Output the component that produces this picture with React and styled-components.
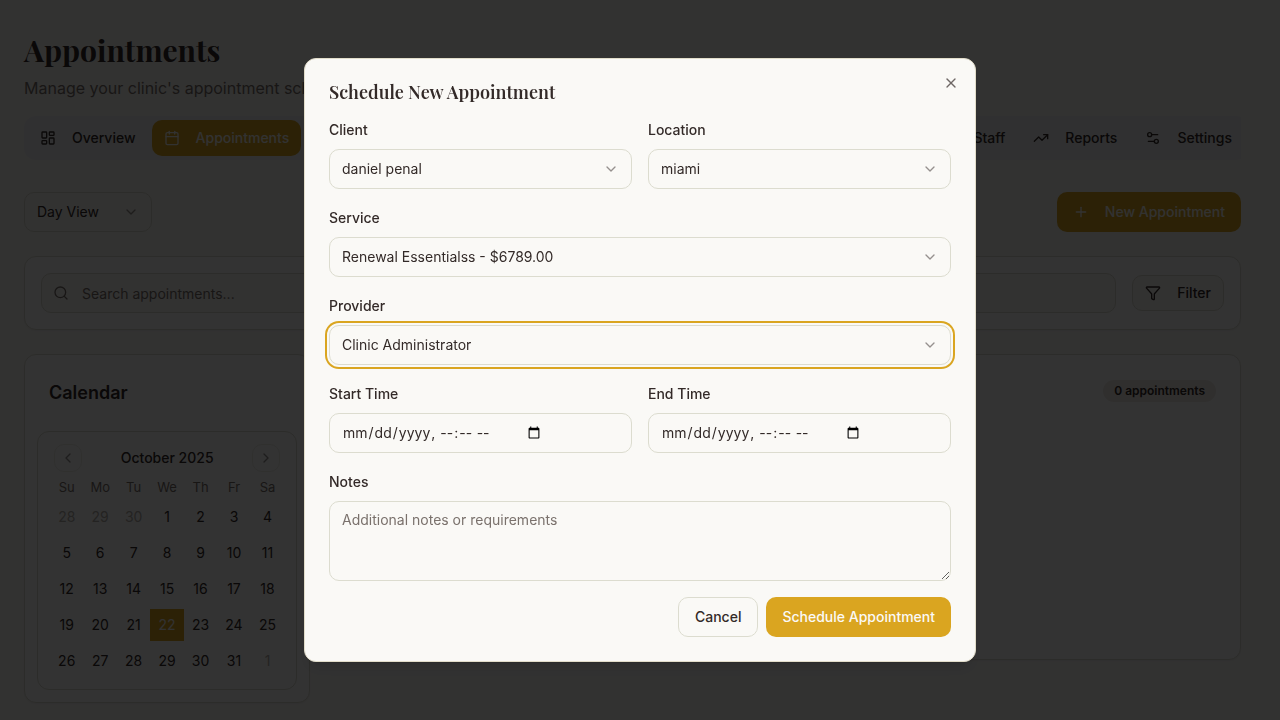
import React from "react";
import styled, { createGlobalStyle, css } from "styled-components";
import {
  Calendar,
  ChevronDown,
  ChevronLeft,
  ChevronRight,
  Funnel,
  LayoutDashboard,
  Plus,
  Search,
  Settings2,
  TrendingUp,
  Users,
  X,
} from "lucide-react";

const c = {
  bg: "#faf9f6",
  card: "#ffffff",
  text: "#332a28",
  muted: "#7a716c",
  faint: "#b4afaa",
  border: "#dcdccf",
  tabs: "#f0f0f2",
  gold: "#daa520",
  badge: "#f0ebe6",
};

const GlobalStyle = createGlobalStyle`
  *, *::before, *::after { box-sizing: border-box; }
  body {
    margin: 0;
    background: ${c.bg};
    color: ${c.text};
    font: 400 16px/24px Inter, "Liberation Sans", sans-serif;
    overflow: hidden;
  }
  h1, h2, h3, p { margin: 0; }
  button, input, select, textarea { font: inherit; color: inherit; }
`;

const serif = css`
  font-family: "Playfair Display", "Liberation Serif", serif;
`;

const Page = styled.main`
  padding: 32px 39px 16px 24px;
`;

const PageTitle = styled.h1`
  ${serif}
  font-size: 30px;
  line-height: 36px;
  font-weight: 700;
`;

const Subtitle = styled.p`
  margin-top: 8px;
  color: ${c.muted};
`;

const TabScroller = styled.div`
  margin-top: 16px;
  overflow: hidden;
`;

const TabList = styled.nav`
  display: flex;
  gap: 4px;
  margin-right: -7px;
  padding: 4px;
  border-radius: 12px;
  background: ${c.tabs};
`;

const Tab = styled.button`
  display: flex;
  align-items: center;
  gap: 16px;
  height: 36px;
  padding: 0 12px;
  border: 0;
  border-radius: 10px;
  font-size: 14px;
  line-height: 20px;
  font-weight: 500;
  background: ${(p) => (p.$active ? c.gold : "transparent")};
  color: ${(p) => (p.$active ? c.bg : c.text)};
  margin-left: ${(p) => (p.$pushed ? "auto" : "0")};
`;

const Toolbar = styled.div`
  display: flex;
  justify-content: space-between;
  margin-top: 32px;
`;

const SelectBox = styled.div`
  display: grid;
  align-items: center;
  width: ${(p) => p.$width || "100%"};
  > * {
    grid-area: 1 / 1;
  }
  > svg {
    justify-self: end;
    margin-right: 13px;
    opacity: 0.5;
    pointer-events: none;
  }
`;

const fieldStyle = css`
  width: 100%;
  height: 40px;
  padding: 8px 12px;
  border: 1px solid ${c.border};
  border-radius: 10px;
  background: ${c.bg};
  font-size: 14px;
  line-height: 20px;
  outline: none;
`;

const Select = styled.select`
  ${fieldStyle}
  appearance: none;
  ${(p) =>
    p.$focused &&
    css`
      box-shadow: 0 0 0 2px ${c.bg}, 0 0 0 4px ${c.gold};
    `}
`;

const Button = styled.button`
  display: flex;
  align-items: center;
  justify-content: center;
  gap: 16px;
  height: ${(p) => (p.$small ? 36 : 40)}px;
  padding: 0 ${(p) => (p.$small ? 12 : 16)}px;
  border: ${(p) => (p.$primary ? "0" : `1px solid ${c.border}`)};
  border-radius: 10px;
  background: ${(p) => (p.$primary ? c.gold : c.bg)};
  color: ${(p) => (p.$primary ? c.bg : c.text)};
  font-size: 14px;
  line-height: 20px;
  font-weight: 500;
  white-space: nowrap;
`;

const Card = styled.section`
  border: 1px solid ${c.border};
  border-radius: 12px;
  background: ${c.card};
  box-shadow: 0 1px 2px rgba(0, 0, 0, 0.05);
`;

const SearchCard = styled(Card)`
  display: flex;
  align-items: center;
  gap: 16px;
  margin-top: 24px;
  padding: 16px;
`;

const SearchBox = styled.label`
  display: grid;
  flex: 1;
  align-items: center;
  > * {
    grid-area: 1 / 1;
  }
  > svg {
    margin-left: 12px;
    color: ${c.muted};
    pointer-events: none;
  }
`;

const SearchInput = styled.input`
  ${fieldStyle}
  padding-left: 40px;
  &::placeholder {
    color: ${c.muted};
  }
`;

const Columns = styled.div`
  display: grid;
  grid-template-columns: repeat(4, 1fr);
  align-items: start;
  gap: 24px;
  margin-top: 24px;
`;

const CardTitle = styled.h3`
  padding: 24px;
  font-size: 18px;
  line-height: 28px;
  font-weight: 600;
`;

const Month = styled.div`
  margin: 0 12px 12px;
  padding: 12px;
  border: 1px solid ${c.border};
  border-radius: 12px;
`;

const MonthHeader = styled.div`
  display: flex;
  align-items: center;
  justify-content: space-between;
  padding: 0 4px;
  font-size: 14px;
  line-height: 20px;
  font-weight: 500;
`;

const MonthButton = styled.button`
  display: grid;
  place-items: center;
  width: 28px;
  height: 28px;
  padding: 0;
  border: 1px solid ${c.border};
  border-radius: 10px;
  background: transparent;
  opacity: 0.5;
`;

const Days = styled.table`
  width: 100%;
  margin-top: 4px;
  table-layout: fixed;
  border-collapse: collapse;
  font-size: 14px;
  text-align: center;
`;

const Weekday = styled.th`
  height: 21px;
  padding: 0;
  color: ${c.muted};
  font-size: 13px;
  line-height: 20px;
  font-weight: 400;
`;

const Day = styled.td`
  height: 36px;
  padding: 4px 0 0;
`;

const DayButton = styled.button`
  display: block;
  width: 100%;
  height: 32px;
  padding: 0;
  border: 0;
  background: ${(p) => (p.$selected ? c.gold : "transparent")};
  color: ${(p) => (p.$selected ? c.bg : p.$outside ? c.faint : c.text)};
`;

const Schedule = styled(Card)`
  grid-column: span 3;
  display: flex;
  justify-content: flex-end;
  align-items: flex-start;
  min-height: 306px;
  padding: 25px 24px;
`;

const Badge = styled.span`
  padding: 1px 11px;
  border-radius: 11px;
  background: ${c.badge};
  font-size: 12px;
  line-height: 20px;
  font-weight: 600;
`;

const Overlay = styled.div`
  position: fixed;
  inset: 0;
  z-index: 10;
  display: grid;
  place-items: center;
  background: rgba(0, 0, 0, 0.8);
`;

const Dialog = styled.div`
  position: relative;
  display: grid;
  gap: 16px;
  width: 100%;
  max-width: 672px;
  padding: 24px;
  border: 1px solid #e2ddca;
  border-radius: 12px;
  background: ${c.bg};
  box-shadow: 0 10px 15px -3px rgba(0, 0, 0, 0.1), 0 4px 6px -4px rgba(0, 0, 0, 0.1);
`;

const DialogTitle = styled.h2`
  ${serif}
  font-size: 18px;
  line-height: 18px;
  font-weight: 600;
`;

const CloseButton = styled.button`
  position: absolute;
  top: 16px;
  right: 16px;
  display: grid;
  padding: 0;
  border: 0;
  background: transparent;
  opacity: 0.7;
`;

const Form = styled.form`
  display: grid;
  gap: 16px;
`;

const Pair = styled.div`
  display: grid;
  grid-template-columns: 1fr 1fr;
  gap: 16px;
`;

const FieldBlock = styled.div`
  display: grid;
  gap: 6px;
`;

const Label = styled.label`
  font-size: 14px;
  line-height: 26px;
  font-weight: 500;
`;

const DateInput = styled.input`
  ${fieldStyle}
  display: flex;
`;

const Notes = styled.textarea`
  ${fieldStyle}
  display: block;
  height: 80px;
  resize: vertical;
  &::placeholder {
    color: ${c.muted};
  }
`;

const Actions = styled.div`
  display: flex;
  justify-content: flex-end;
  gap: 8px;
`;

function SelectField({ id, label, value, focused }) {
  return (
    <FieldBlock>
      <Label htmlFor={id}>{label}</Label>
      <SelectBox>
        <Select id={id} $focused={focused}>
          <option>{value}</option>
        </Select>
        <ChevronDown size={16} />
      </SelectBox>
    </FieldBlock>
  );
}

function DateField({ id, label }) {
  return (
    <FieldBlock>
      <Label htmlFor={id}>{label}</Label>
      <DateInput id={id} type="datetime-local" />
    </FieldBlock>
  );
}

const weekdays = ["Su", "Mo", "Tu", "We", "Th", "Fr", "Sa"];
const weeks = [0, 1, 2, 3, 4].map((w) =>
  weekdays.map((_, d) => {
    const n = w * 7 + d - 2;
    if (n < 1) return { n: n + 30, outside: true };
    if (n > 31) return { n: n - 31, outside: true };
    return { n };
  })
);

export default function App() {
  return (
    <>
      <GlobalStyle />
      <Page>
        <PageTitle>Appointments</PageTitle>
        <Subtitle>Manage your clinic's appointment schedule</Subtitle>
        <TabScroller>
          <TabList>
            <Tab><LayoutDashboard size={16} />Overview</Tab>
            <Tab $active><Calendar size={16} />Appointments</Tab>
            <Tab $pushed><Users size={16} />Staff</Tab>
            <Tab><TrendingUp size={16} />Reports</Tab>
            <Tab><Settings2 size={16} />Settings</Tab>
          </TabList>
        </TabScroller>
        <Toolbar>
          <SelectBox $width="128px">
            <Select aria-label="Calendar view">
              <option>Day View</option>
            </Select>
            <ChevronDown size={16} />
          </SelectBox>
          <Button $primary><Plus size={16} />New Appointment</Button>
        </Toolbar>
        <SearchCard>
          <SearchBox>
            <SearchInput aria-label="Search appointments" placeholder="Search appointments..." />
            <Search size={16} />
          </SearchBox>
          <Button $small><Funnel size={16} />Filter</Button>
        </SearchCard>
        <Columns>
          <Card>
            <CardTitle>Calendar</CardTitle>
            <Month>
              <MonthHeader>
                <MonthButton aria-label="Previous month"><ChevronLeft size={16} /></MonthButton>
                October 2025
                <MonthButton aria-label="Next month"><ChevronRight size={16} /></MonthButton>
              </MonthHeader>
              <Days>
                <thead>
                  <tr>{weekdays.map((d) => <Weekday key={d}>{d}</Weekday>)}</tr>
                </thead>
                <tbody>
                  {weeks.map((week, i) => (
                    <tr key={i}>
                      {week.map((day) => (
                        <Day key={day.n}>
                          <DayButton $outside={day.outside} $selected={day.n === 22}>{day.n}</DayButton>
                        </Day>
                      ))}
                    </tr>
                  ))}
                </tbody>
              </Days>
            </Month>
          </Card>
          <Schedule>
            <Badge>0 appointments</Badge>
          </Schedule>
        </Columns>
      </Page>
      <Overlay>
        <Dialog role="dialog" aria-modal="true" aria-labelledby="dialog-title">
          <DialogTitle id="dialog-title">Schedule New Appointment</DialogTitle>
          <Form>
            <Pair>
              <SelectField id="client" label="Client" value="daniel penal" />
              <SelectField id="location" label="Location" value="miami" />
            </Pair>
            <SelectField id="service" label="Service" value="Renewal Essentialss - $6789.00" />
            <SelectField id="provider" label="Provider" value="Clinic Administrator" focused />
            <Pair>
              <DateField id="start" label="Start Time" />
              <DateField id="end" label="End Time" />
            </Pair>
            <FieldBlock>
              <Label htmlFor="notes">Notes</Label>
              <Notes id="notes" placeholder="Additional notes or requirements" />
            </FieldBlock>
            <Actions>
              <Button type="button">Cancel</Button>
              <Button type="submit" $primary>Schedule Appointment</Button>
            </Actions>
          </Form>
          <CloseButton aria-label="Close"><X size={16} /></CloseButton>
        </Dialog>
      </Overlay>
    </>
  );
}
